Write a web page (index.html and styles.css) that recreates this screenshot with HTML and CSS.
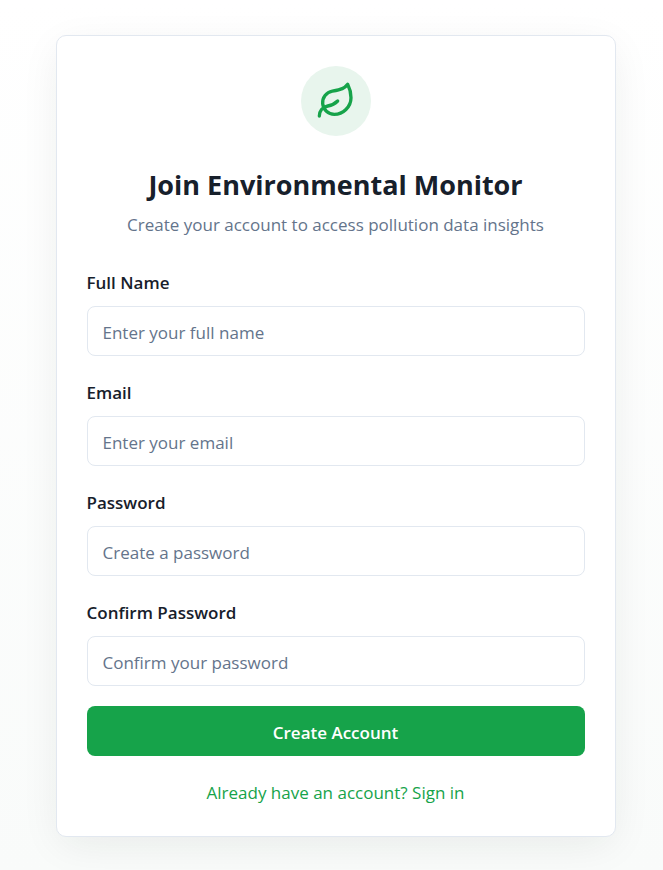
FILE: index.html
```html
<!DOCTYPE html>
<html lang="en">
<head>
<meta charset="utf-8">
<meta name="viewport" content="width=device-width, initial-scale=1">
<title>Join Environmental Monitor</title>
<link rel="stylesheet" href="styles.css">
</head>
<body>
<main class="card">
  <header class="header">
    <div class="badge">
      <svg class="leaf" viewBox="0 0 24 24" fill="none" stroke="currentColor" stroke-width="2" stroke-linecap="round" stroke-linejoin="round" aria-hidden="true">
        <path d="M11 20A7 7 0 0 1 9.8 6.1C15.5 5 17 4.48 19 2c1 2 2 4.18 2 8 0 5.5-4.78 10-10 10Z"/>
        <path d="M2 21c0-3 1.85-5.36 5.08-6C9.5 14.52 12 13 13 12"/>
      </svg>
    </div>
    <h1 class="title">Join Environmental Monitor</h1>
    <p class="subtitle">Create your account to access pollution data insights</p>
  </header>
  <form class="form">
    <div class="field">
      <label class="label" for="name">Full Name</label>
      <input class="input" id="name" type="text" placeholder="Enter your full name">
    </div>
    <div class="field">
      <label class="label" for="email">Email</label>
      <input class="input" id="email" type="email" placeholder="Enter your email">
    </div>
    <div class="field">
      <label class="label" for="password">Password</label>
      <input class="input" id="password" type="password" placeholder="Create a password">
    </div>
    <div class="field">
      <label class="label" for="confirm">Confirm Password</label>
      <input class="input" id="confirm" type="password" placeholder="Confirm your password">
    </div>
    <button class="submit" type="submit">Create Account</button>
  </form>
  <p class="footer"><a class="link" href="#signin">Already have an account? Sign in</a></p>
</main>
</body>
</html>
```
FILE: styles.css
```css
* {
  box-sizing: border-box;
}

body {
  margin: 0;
  min-height: 100vh;
  padding: 35px 20px 20px 28px;
  display: flex;
  align-items: flex-start;
  justify-content: center;
  background: linear-gradient(to bottom, #ffffff, #f9fbfa);
  color: #17202b;
  font-family: "Open Sans", "Noto Sans", sans-serif;
  font-size: 17px;
  line-height: 24px;
}

.card {
  width: 100%;
  max-width: 560px;
  padding: 30px 30px 31px;
  background: #ffffff;
  border: 1px solid #e2e8f0;
  border-radius: 10px;
  box-shadow: 0 10px 40px -4px rgba(20, 40, 30, 0.08);
}

.header {
  text-align: center;
}

.badge {
  width: 70px;
  height: 70px;
  margin: 0 auto 29px;
  display: flex;
  align-items: center;
  justify-content: center;
  border-radius: 50%;
  background: #e8f5ed;
  color: #16a34a;
}

.leaf {
  width: 40px;
  height: 40px;
}

.title {
  margin: 0;
  font-size: 27px;
  line-height: 40px;
  font-weight: 700;
}

.subtitle {
  margin: 8px 0 29px;
  color: #64748b;
}

.form {
  display: grid;
  gap: 20px;
}

.field {
  display: grid;
  gap: 6px;
}

.label {
  font-weight: 600;
  line-height: 34px;
}

.input {
  width: 100%;
  height: 50px;
  padding: 2px 15px 0;
  border: 1px solid #e2e8f0;
  border-radius: 8px;
  background: #ffffff;
  color: inherit;
  font: inherit;
}

.input::placeholder {
  color: #64748b;
  opacity: 1;
}

.submit {
  height: 50px;
  padding: 4px 15px 0;
  border: 0;
  border-radius: 8px;
  background: #16a34a;
  color: #ffffff;
  font: inherit;
  font-weight: 600;
}

.footer {
  margin: 25px 0 0;
  text-align: center;
}

.link {
  color: #16a34a;
  text-decoration: none;
}
```
